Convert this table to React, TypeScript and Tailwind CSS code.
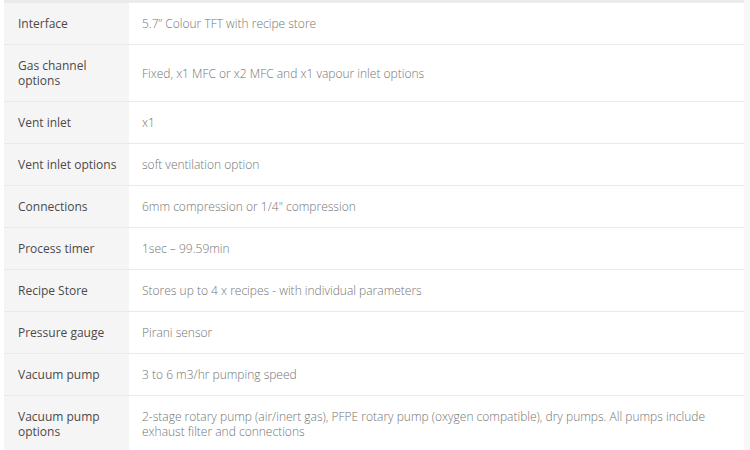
import React from "react";

const specs: { label: string; value: string }[] = [
  { label: "Interface", value: "5.7\u201d Colour TFT with recipe store" },
  { label: "Gas channel options", value: "Fixed, x1 MFC or x2 MFC and x1 vapour inlet options" },
  { label: "Vent inlet", value: "x1" },
  { label: "Vent inlet options", value: "soft ventilation option" },
  { label: "Connections", value: "6mm compression or 1/4\" compression" },
  { label: "Process timer", value: "1sec \u2013 99.59min" },
  { label: "Recipe Store", value: "Stores up to 4 x recipes - with individual parameters" },
  { label: "Pressure gauge", value: "Pirani sensor" },
  { label: "Vacuum pump", value: "3 to 6 m3/hr pumping speed" },
  {
    label: "Vacuum pump options",
    value:
      "2-stage rotary pump (air/inert gas), PFPE rotary pump (oxygen compatible), dry pumps. All pumps include exhaust filter and connections",
  },
];

const App: React.FC = () => {
  return (
    <div
      className="flex w-[750px] h-[450px] overflow-hidden bg-white"
      style={{ fontFamily: "'Open Sans', 'Liberation Sans', sans-serif" }}
    >
      <div className="w-1 shrink-0" />
      <div className="w-[740px] shrink-0 border-t-[3px] border-[#ebebeb]">
        <table className="w-full border-collapse text-[12px] leading-[15px]">
          <tbody>
            {specs.map((row, i) => (
              <tr key={i} className="border-b border-[#e9e9e9]">
                <td className="w-[125px] bg-[#f6f5f5] pl-[14px] pr-2 py-[13px] align-middle font-medium text-[#4a4a4a]">
                  {row.label}
                </td>
                <td className="pl-[13px] pr-4 py-[13px] align-middle font-light text-[#747474]">
                  {row.value}
                </td>
              </tr>
            ))}
          </tbody>
        </table>
      </div>
      <div className="flex-1 bg-[#f8f8f8]" />
    </div>
  );
};

export default App;
